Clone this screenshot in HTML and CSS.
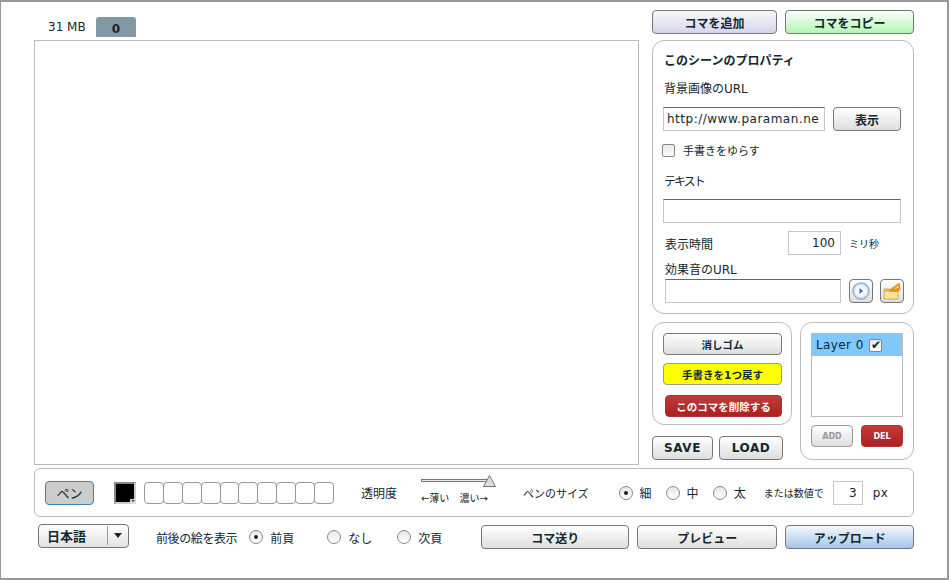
FILE: index.html
```html
<!DOCTYPE html>
<html lang="ja">
<head>
  <meta charset="UTF-8" />
  <title>Paraman Editor</title>
  <link rel="stylesheet" href="styles.css">
</head>
<body>
<div class="frame">
  <div class="workspace">
    <section class="stage">
      <div class="tabs">
        <span class="memory">31 MB</span>
        <span class="tab">0</span>
      </div>
      <div class="canvas"></div>
    </section>

    <aside class="side">
      <div class="frame-buttons">
        <button class="btn btn-lavender btn-add">コマを追加</button>
        <button class="btn btn-green btn-copy">コマをコピー</button>
      </div>

      <div class="panel props">
        <div class="props-title">このシーンのプロパティ</div>
        <div class="props-label bg-label">背景画像のURL</div>
        <div class="bg-row">
          <input class="field bg-url" type="text" value="http://www.paraman.ne">
          <button class="btn show-btn">表示</button>
        </div>
        <label class="shake-row"><input class="check" type="checkbox">手書きをゆらす</label>
        <div class="props-label text-label">テキスト</div>
        <input class="field text-field" type="text">
        <div class="time-row">
          <span class="time-label">表示時間</span>
          <input class="field time-field" type="text" value="100">
          <span class="time-unit">ミリ秒</span>
        </div>
        <div class="props-label sound-label">効果音のURL</div>
        <div class="sound-row">
          <input class="field sound-url" type="text">
          <button class="icon-btn" aria-label="再生">
            <svg width="18" height="18" viewBox="0 0 18 18">
              <circle cx="9" cy="9" r="8" fill="#dfe9f7" stroke="#8fb0dc" stroke-width="1.5"/>
              <circle cx="9" cy="9" r="5.5" fill="#f4f7fc"/>
              <path d="M7.500 6 L11 9 L7.500 12 Z" fill="#2f6db5"/>
            </svg>
          </button>
          <button class="icon-btn" aria-label="開く">
            <svg width="20" height="20" viewBox="0 0 20 20">
              <path d="M2 8 H7 L8 10 H16 V18 H2 Z" fill="#f0c050" stroke="#c9973a" stroke-width="0.8"/>
              <path d="M2.500 11 H15.500 V17.500 H2.500 Z" fill="#fbe39a"/>
              <path d="M6 9.500 L17.500 1.500 L18.500 8 L16.500 11 H10 Z" fill="#e8951f"/>
              <path d="M12 8 L16.500 4 L16.500 7 Z" fill="#f9d276"/>
            </svg>
          </button>
        </div>
      </div>

      <div class="lower">
        <div class="lower-left">
          <div class="panel tools">
            <button class="btn tool-btn">消しゴム</button>
            <button class="btn tool-btn btn-yellow">手書きを1つ戻す</button>
            <button class="btn tool-btn btn-red btn-delete">このコマを削除する</button>
          </div>
          <div class="save-row">
            <button class="btn btn-save">SAVE</button>
            <button class="btn btn-load">LOAD</button>
          </div>
        </div>
        <div class="panel layers">
          <div class="layer-list">
            <label class="layer-item">Layer 0<input class="check" type="checkbox" checked></label>
          </div>
          <div class="layer-buttons">
            <button class="btn btn-mini btn-disabled">ADD</button>
            <button class="btn btn-mini btn-red">DEL</button>
          </div>
        </div>
      </div>
    </aside>
  </div>

  <div class="toolbar">
    <button class="btn pen-btn">ペン</button>
    <span class="color-well"><i class="color-arrow"></i></span>
    <div class="palette">
      <i></i><i></i><i></i><i></i><i></i><i></i><i></i><i></i><i></i><i></i>
    </div>
    <span class="opacity-label">透明度</span>
    <div class="opacity">
      <svg class="slider" width="76" height="14" viewBox="0 0 76 14">
        <rect x="0.500" y="4.500" width="68" height="2" fill="#eee" stroke="#777" stroke-width="1"/>
        <path d="M68.500 .5 L74.500 11.500 H62.500 Z" fill="#ddd" stroke="#777"/>
      </svg>
      <div class="opacity-hint"><span>←薄い</span><span>濃い→</span></div>
    </div>
    <span class="size-label">ペンのサイズ</span>
    <label class="radio-item size-thin"><input class="radio" type="radio" name="size" checked>細</label>
    <label class="radio-item size-mid"><input class="radio" type="radio" name="size">中</label>
    <label class="radio-item size-big"><input class="radio" type="radio" name="size">太</label>
    <span class="size-num-label">または数値で</span>
    <input class="field size-field" type="text" value="3">
    <span class="size-unit">px</span>
  </div>

  <div class="footer-row">
    <div class="lang-select">
      <span class="lang-name">日本語</span>
      <span class="lang-arrow"></span>
    </div>
    <span class="onion-label">前後の絵を表示</span>
    <label class="radio-item onion-prev"><input class="radio" type="radio" name="onion" checked>前頁</label>
    <label class="radio-item onion-none"><input class="radio" type="radio" name="onion">なし</label>
    <label class="radio-item onion-next"><input class="radio" type="radio" name="onion">次頁</label>
    <button class="btn btn-step">コマ送り</button>
    <button class="btn btn-preview">プレビュー</button>
    <button class="btn btn-blue btn-upload">アップロード</button>
  </div>
</div>
</body>
</html>
```

FILE: styles.css
```css
* {
  box-sizing: border-box;
}
body {
  margin: 0;
  background: #fff;
  color: #12282f;
  font-family: "DejaVu Sans", "Noto Sans CJK JP", sans-serif;
  font-size: 12px;
}
.frame {
  width: 949px;
  height: 580px;
  border: 2px solid #999;
  border-left-width: 1px;
  padding: 8px 0 0 33px;
}
.workspace {
  display: flex;
  gap: 13px;
  height: 455px;
}

/* stage */
.stage {
  width: 605px;
}
.tabs {
  display: flex;
  align-items: flex-end;
  height: 27px;
}
.memory {
  width: 48px;
  margin-left: 14px;
  margin-bottom: 3px;
}
.tab {
  width: 40px;
  height: 20px;
  background: #8199a5;
  border-radius: 3px 3px 0 0;
  font-weight: bold;
  text-align: center;
  line-height: 24px;
}
.canvas {
  height: 425px;
  margin-top: 3px;
  border: 1px solid #bbb;
  background: #fff;
}

/* buttons */
.btn {
  display: block;
  flex: none;
  padding: 0;
  height: 24px;
  border: 1px solid #777;
  border-radius: 4px;
  background: linear-gradient(#fff, #dedede);
  color: #12282f;
  font: bold 12px "DejaVu Sans", "Noto Sans CJK JP", sans-serif;
  white-space: nowrap;
  cursor: pointer;
}
.btn-lavender { background: linear-gradient(#f8f8fc, #d6d6ea); }
.btn-green { background: linear-gradient(#fbfffb, #b5f5b5); }
.btn-blue { background: linear-gradient(#f4f8fd, #a6c6ea); }
.btn-yellow { background: #ff0; border-color: #999; }
.btn-red {
  background: linear-gradient(#c23a3a, #ab2020);
  border-color: #a33;
  color: #fff;
}

/* side column */
.side {
  width: 262px;
}
.frame-buttons {
  display: flex;
  gap: 8px;
}
.btn-add { width: 125px; }
.btn-copy { width: 129px; }
.panel {
  border: 1px solid #bbb;
  border-radius: 12px;
  background: #fff;
}
.props {
  height: 274px;
  margin-top: 6px;
  padding: 12px 0 0 10px;
}
.props-title {
  height: 16px;
  line-height: 16px;
  margin-left: 1px;
  font-weight: bold;
}
.props-label {
  height: 16px;
  line-height: 16px;
  margin-left: 1px;
}
.bg-label { margin-top: 12px; }
.field {
  display: block;
  flex: none;
  height: 24px;
  padding: 0 5px 0 3px;
  border: 1px solid #c8c8c8;
  border-top-color: #666;
  background: #fff;
  color: #12282f;
  font: 12px "DejaVu Sans", "Noto Sans CJK JP", sans-serif;
  outline: none;
}
.bg-row {
  display: flex;
  gap: 8px;
  margin-top: 10px;
}
.bg-url {
  width: 162px;
  letter-spacing: .5px;
}
.show-btn { width: 68px; }
.check, .radio {
  appearance: none;
  flex: none;
  margin: 0;
  border: 1px solid #888;
  background: linear-gradient(#e8e8e8, #fff);
}
.check {
  position: relative;
  width: 13px;
  height: 13px;
  border-radius: 2px;
}
.check:checked::after {
  content: "✔";
  position: absolute;
  left: 1px;
  top: -2px;
  color: #12282f;
  font-size: 12px;
  line-height: 15px;
}
.radio {
  position: relative;
  width: 14px;
  height: 14px;
  border-radius: 50%;
}
.radio:checked::after {
  content: "";
  position: absolute;
  left: 4px;
  top: 4px;
  width: 4px;
  height: 4px;
  border-radius: 50%;
  background: #222;
}
.shake-row {
  display: flex;
  align-items: center;
  gap: 8px;
  height: 16px;
  margin-top: 11px;
  margin-left: -1px;
  font-size: 11px;
}
.text-label {
  margin-top: 16px;
  letter-spacing: -2px;
}
.text-field {
  width: 238px;
  margin-top: 9px;
}
.time-row {
  display: flex;
  align-items: center;
  height: 24px;
  margin-top: 8px;
  padding-left: 2px;
}
.time-label { width: 123px; }
.time-field {
  width: 53px;
  margin-right: 8px;
  text-align: right;
  border-top-color: #c8c8c8;
}
.time-unit { font-size: 10px; }
.sound-label {
  margin-top: 7px;
  margin-left: 2px;
}
.sound-row {
  display: flex;
  gap: 7px;
  margin-top: 1px;
  padding-left: 2px;
}
.sound-url {
  width: 176px;
  margin-right: 1px;
}
.icon-btn {
  display: flex;
  align-items: center;
  justify-content: center;
  width: 24px;
  height: 24px;
  padding: 0;
  border: 1px solid #777;
  border-radius: 4px;
  background: linear-gradient(#fff, #dedede);
}

/* lower side area */
.lower {
  display: flex;
  gap: 8px;
  margin-top: 8px;
}
.lower-left {
  width: 140px;
}
.tools {
  height: 103px;
  padding: 10px 9px 0 10px;
}
.tool-btn {
  width: 119px;
  height: 22px;
  margin-bottom: 8px;
  font-size: 10.5px;
}
.btn-delete {
  width: 117px;
  margin: 10px 0 0 2px;
}
.save-row {
  display: flex;
  gap: 6px;
  margin-top: 11px;
}
.btn-save {
  width: 61px;
  letter-spacing: .6px;
}
.btn-load {
  width: 64px;
  letter-spacing: .6px;
}
.layers {
  width: 114px;
  height: 138px;
  padding: 10px 0 0 10px;
}
.layer-list {
  width: 92px;
  height: 84px;
  border: 1px solid #bbb;
}
.layer-item {
  display: flex;
  align-items: center;
  gap: 5px;
  height: 22px;
  padding-left: 4px;
  background: #80c8ff;
  letter-spacing: .4px;
}
.layer-buttons {
  display: flex;
  gap: 8px;
  margin-top: 8px;
}
.btn-mini {
  width: 42px;
  height: 22px;
  font-size: 8px;
}
.btn-disabled {
  border-color: #999;
  color: #999;
}

/* pen toolbar */
.toolbar {
  display: flex;
  align-items: center;
  width: 880px;
  height: 49px;
  margin-top: 3px;
  padding-left: 10px;
  border: 1px solid #bbb;
  border-radius: 6px;
  white-space: nowrap;
}
.pen-btn {
  width: 49px;
  border-color: #3a85b5;
  background: #ccc;
  font-weight: normal;
  font-size: 13px;
}
.color-well {
  position: relative;
  flex: none;
  width: 22px;
  height: 22px;
  margin-left: 20px;
  border: 2px solid #ccc;
  border-color: #888 #ccc #ccc #888;
  background: #000;
}
.color-arrow {
  position: absolute;
  right: -2px;
  bottom: -2px;
  width: 6px;
  height: 5px;
  background: #ddd;
}
.color-arrow::after {
  content: "";
  position: absolute;
  left: 1px;
  top: 1px;
  border: 2px solid transparent;
  border-top: 2px solid #444;
  border-bottom: 0;
}
.palette {
  display: flex;
  flex: none;
  margin-left: 8px;
}
.palette i {
  width: 19.9px;
  height: 22px;
  margin-right: -1px;
  border: 1px solid #999;
  border-radius: 4px;
}
.opacity-label {
  margin-left: 28px;
}
.opacity {
  flex: none;
  width: 76px;
  margin-left: 24px;
  margin-top: -3px;
}
.slider {
  display: block;
}
.opacity-hint {
  display: flex;
  justify-content: space-between;
  width: 67px;
  margin-top: 2px;
  font-size: 10px;
  line-height: 16px;
}
.size-label {
  margin-left: 26px;
  font-size: 11px;
}
.radio-item {
  display: flex;
  flex: none;
  align-items: center;
  gap: 7px;
  white-space: nowrap;
}
.size-thin { margin-left: 30px; }
.size-mid { margin-left: 14px; }
.size-big { margin-left: 14px; }
.size-num-label {
  margin-left: 18px;
  font-size: 10px;
}
.size-field {
  width: 30px;
  margin-left: 9px;
  text-align: right;
  border-top-color: #c8c8c8;
}
.size-unit {
  margin-left: 10px;
  letter-spacing: .5px;
}

/* bottom row */
.footer-row {
  display: flex;
  align-items: center;
  width: 880px;
  margin-top: 8px;
  padding-left: 4px;
  white-space: nowrap;
}
.lang-select {
  display: flex;
  flex: none;
  align-items: center;
  width: 91px;
  height: 24px;
  margin-top: -3px;
  border: 1px solid #777;
  border-radius: 4px;
  background: linear-gradient(#fff, #e2e2e2);
}
.lang-name {
  width: 69px;
  padding-left: 8px;
  border-right: 1px solid #999;
  font-size: 13px;
  font-weight: bold;
}
.lang-arrow {
  width: 0;
  height: 0;
  margin-left: 6px;
  border: 4px solid transparent;
  border-top: 5px solid #222;
  border-bottom: 0;
}
.onion-label {
  margin-left: 27px;
  letter-spacing: -.4px;
}
.onion-prev { margin-left: 12px; }
.onion-none { margin-left: 33px; }
.onion-next { margin-left: 25px; }
.btn-step {
  width: 148px;
  margin-left: 39px;
}
.btn-preview {
  width: 140px;
  margin-left: 8px;
}
.btn-upload {
  width: 129px;
  margin-left: 8px;
}
```
